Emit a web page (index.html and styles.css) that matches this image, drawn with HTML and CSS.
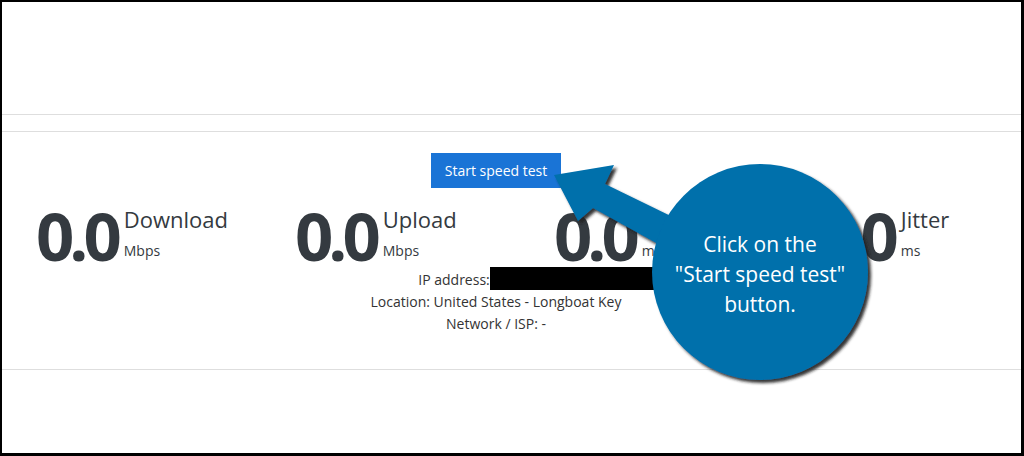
FILE: index.html
```html
<!DOCTYPE html>
<html lang="en">
<head>
    <meta charset="UTF-8">
    <title>Speed test</title>
    <link rel="stylesheet" href="styles.css">
</head>
<body>

<div class="frame">
    <div class="header"></div>
    <div class="band"></div>

    <!-- Speed test block -->
    <div class="test">
        <div class="start">
            <button class="start-button">Start speed test</button>
        </div>

        <div class="meters">
            <div class="meter">
                <div class="value">0.0</div>
                <div class="label">
                    <div class="name">Download</div>
                    <div class="unit">Mbps</div>
                </div>
            </div>
            <div class="meter">
                <div class="value">0.0</div>
                <div class="label">
                    <div class="name">Upload</div>
                    <div class="unit">Mbps</div>
                </div>
            </div>
            <div class="meter">
                <div class="value">0.0</div>
                <div class="label">
                    <div class="name">Ping</div>
                    <div class="unit">ms</div>
                </div>
            </div>
            <div class="meter">
                <div class="value">0.0</div>
                <div class="label">
                    <div class="name">Jitter</div>
                    <div class="unit">ms</div>
                </div>
            </div>
        </div>

        <div class="info">
            <div>IP address:<span class="ip"></span></div>
            <div>Location: United States - Longboat Key</div>
            <div>Network / ISP: -</div>
        </div>
    </div>

    <!-- Callout over the page -->
    <svg class="callout" width="1024" height="456" viewBox="0 0 1024 456">
        <defs>
            <filter id="shadow" x="-20%" y="-20%" width="140%" height="140%">
                <feDropShadow dx="3" dy="3" stdDeviation="1.5" flood-color="#1e1e1e" flood-opacity="0.9"/>
            </filter>
        </defs>
        <g filter="url(#shadow)" fill="#006fab">
            <polygon points="554,175 614,165 605,184 720,240 705,270 593,208 578,221"/>
            <circle cx="760" cy="272" r="108"/>
        </g>
        <text class="callout-text" x="760" y="252">Click on the</text>
        <text class="callout-text" x="760" y="282">"Start speed test"</text>
        <text class="callout-text" x="760" y="312">button.</text>
    </svg>
</div>

</body>
</html>
```

FILE: styles.css
```css
body {
    margin: 0;
    font-family: "Open Sans", "Noto Sans", sans-serif;
    color: #343a40;
}
.frame {
    position: relative;
    width: 1024px;
    height: 456px;
    box-sizing: border-box;
    border-style: solid;
    border-color: #000;
    border-width: 2px 3px 3px 2px;
    background: #fff;
    overflow: hidden;
}
.header {
    height: 112px;
    border-bottom: 1px solid #dedede;
}
.band {
    height: 16px;
    border-bottom: 1px solid #dedede;
}
.test {
    height: 238px;
    padding: 21px 31px 0 0;
    box-sizing: border-box;
    border-bottom: 1px solid #dedede;
}
.start {
    text-align: center;
}
.start-button {
    height: 35px;
    padding: 0 14px;
    border: none;
    background: #1a74d6;
    color: #fff;
    font-family: "Open Sans", sans-serif;
    font-size: 14px;
}

/* Meters next to each other */
.meters {
    display: flex;
    margin-top: 13px;
    padding-left: 34px;
}
.meter {
    flex: none;
    width: 259px;
    display: flex;
    align-items: flex-start;
}
.value {
    font-size: 67px;
    line-height: 68px;
    font-weight: bold;
    letter-spacing: -5px;
    color: #343a40;
}
.label {
    margin-left: 7px;
    margin-top: 3px;
}
.name {
    font-size: 22px;
    line-height: 30px;
}
.unit {
    font-size: 14px;
    line-height: 22px;
    margin-top: 6px;
}

.info {
    text-align: center;
    font-size: 14px;
    line-height: 22px;
    color: #333;
}
.ip {
    position: relative;
    display: inline-block;
    width: 84px;
}
.ip::after {
    content: "";
    position: absolute;
    left: 0;
    top: -18px;
    width: 200px;
    height: 23px;
    background: #000;
}

.callout {
    position: absolute;
    left: -2px;
    top: -2px;
}
.callout-text {
    fill: #fff;
    font-family: "Open Sans", sans-serif;
    font-size: 21px;
    text-anchor: middle;
}
```
